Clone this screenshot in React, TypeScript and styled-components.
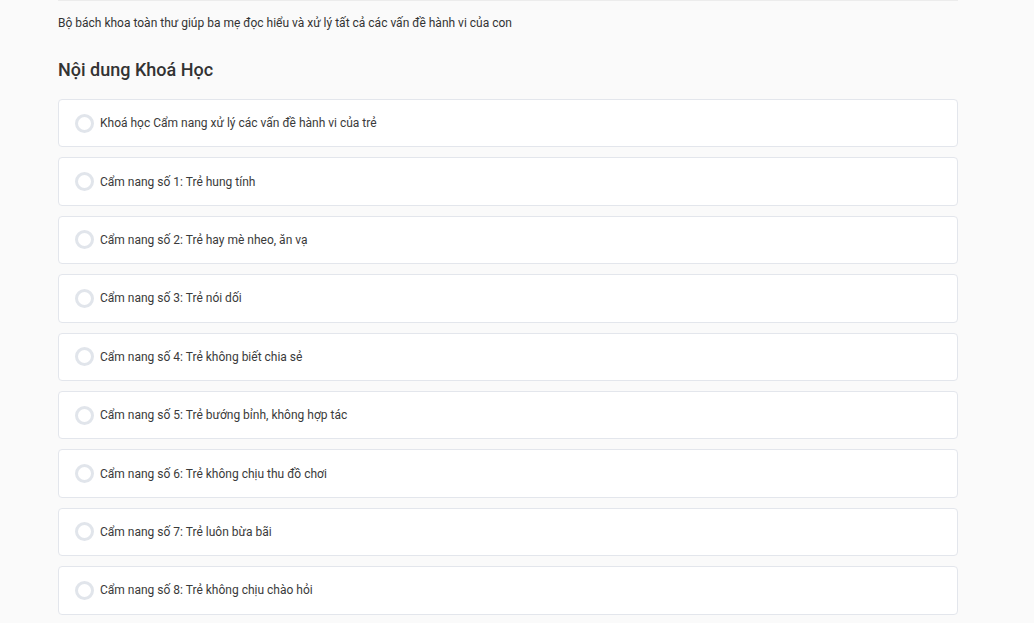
import React from "react";
import styled, { createGlobalStyle } from "styled-components";

const Global = createGlobalStyle`
  html, body { margin: 0; padding: 0; background: #fafafa; }
  body { font-family: Roboto, "Liberation Sans", Arial, sans-serif; color: #333; }
`;

const Page = styled.div`
  width: 900px;
  margin-left: 58px;
  border-top: 1px solid #ececec;
`;

const Subtitle = styled.p`
  margin: 13px 0 0;
  font-size: 12px;
  line-height: 18px;
  color: #333;
`;

const Heading = styled.h2`
  margin: 26px 0 0;
  font-size: 18px;
  line-height: 24px;
  font-weight: 500;
  color: #333;
`;

const List = styled.div`
  margin-top: 17px;
  display: flex;
  flex-direction: column;
  gap: 10px;
`;

const Card = styled.div`
  box-sizing: border-box;
  height: 48.4px;
  display: flex;
  align-items: center;
  gap: 6px;
  padding-left: 16px;
  background: #fff;
  border: 1px solid #e3e6ec;
  border-radius: 4px;
`;

const Circle = styled.span`
  box-sizing: border-box;
  width: 19px;
  height: 19px;
  border-radius: 50%;
  border: 3px solid #e1e5eb;
  flex: none;
`;

const Label = styled.span`
  font-size: 12px;
  color: #3a3a3a;
`;

const items = [
  "Khoá học Cẩm nang xử lý các vấn đề hành vi của trẻ",
  "Cẩm nang số 1: Trẻ hung tính",
  "Cẩm nang số 2: Trẻ hay mè nheo, ăn vạ",
  "Cẩm nang số 3: Trẻ nói dối",
  "Cẩm nang số 4: Trẻ không biết chia sẻ",
  "Cẩm nang số 5: Trẻ bướng bỉnh, không hợp tác",
  "Cẩm nang số 6: Trẻ không chịu thu đồ chơi",
  "Cẩm nang số 7: Trẻ luôn bừa bãi",
  "Cẩm nang số 8: Trẻ không chịu chào hỏi",
];

export default function App() {
  return (
    <>
      <Global />
      <Page>
        <Subtitle>Bộ bách khoa toàn thư giúp ba mẹ đọc hiểu và xử lý tất cả các vấn đề hành vi của con</Subtitle>
        <Heading>Nội dung Khoá Học</Heading>
        <List>
          {items.map((t) => (
            <Card key={t}>
              <Circle />
              <Label>{t}</Label>
            </Card>
          ))}
        </List>
      </Page>
    </>
  );
}
